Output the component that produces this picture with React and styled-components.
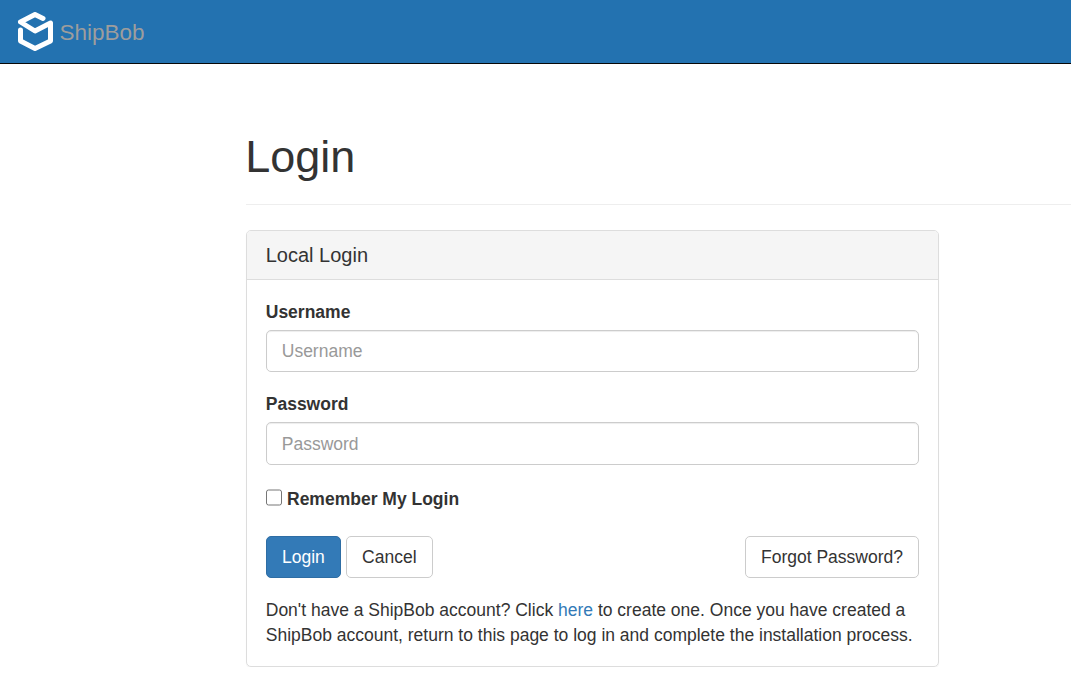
import React from 'react';
import styled, { createGlobalStyle } from 'styled-components';

// the original is bootstrap 3 seen at 125% browser zoom, so most sizes are 1.25x
const GlobalStyle = createGlobalStyle`
  html, body {
    margin: 0;
    padding: 0;
    background: #fff;
    overflow: hidden;
  }
  body {
    font-family: "Liberation Sans", Arial, sans-serif;
    font-size: 17.5px;
    line-height: 25px;
    color: #333;
  }
  * {
    box-sizing: border-box;
  }
`;

const Navbar = styled.nav`
  height: 64px;
  background: #2372b0;
  border-bottom: 1px solid #080808;
  display: flex;
  align-items: center;
  padding-left: 15.5px;
`;

const Brand = styled.a`
  display: flex;
  align-items: center;
  gap: 6px;
  color: #9d9d9d;
  font-size: 22.5px;
  text-decoration: none;
`;

const BrandName = styled.span`
  position: relative;
  top: 1px;
`;

const Main = styled.main`
  padding-left: 246px;
`;

const PageHeader = styled.header`
  padding: 68px 0 22.5px;
  border-bottom: 1px solid #eee;
  margin-bottom: 25px;
`;

const Title = styled.h1`
  margin: 0 0 0 -0.75px;
  font-size: 45px;
  font-weight: 500;
  line-height: 49.5px;
`;

const Panel = styled.section`
  width: 693px;
  border: 1px solid #ddd;
  border-radius: 5px;
  box-shadow: 0 1px 1px rgba(0, 0, 0, 0.05);
`;

const PanelHeading = styled.div`
  height: 49px;
  padding: 0 18.75px;
  display: flex;
  align-items: center;
  background: #f5f5f5;
  border-bottom: 1px solid #ddd;
  border-radius: 4px 4px 0 0;
  font-size: 20px;
`;

const PanelBody = styled.div`
  padding: 18.5px 18.75px 18.25px;
`;

const Field = styled.div`
  margin-bottom: 18.75px;
`;

const Label = styled.label`
  display: block;
  margin-bottom: 5.25px;
  font-weight: 700;
  line-height: 26px;
`;

const Input = styled.input`
  display: block;
  width: 100%;
  height: 42.5px;
  padding: 1.5px 15px 0;
  border: 1px solid #ccc;
  border-radius: 5px;
  box-shadow: inset 0 1px 1px rgba(0, 0, 0, 0.075);
  font: inherit;
  color: #555;

  &::placeholder {
    color: #999;
    opacity: 1;
  }
`;

const Remember = styled.label`
  display: flex;
  align-items: center;
  gap: 5px;
  padding-top: 3px;
  margin-bottom: 24.25px;
  font-weight: 700;
`;

const Check = styled.input`
  width: 16.25px;
  height: 16.25px;
  margin: 0 0 3px 0;
`;

const Actions = styled.div`
  display: flex;
  gap: 4.75px;
  margin-bottom: 19.5px;
`;

const Button = styled.button`
  height: 42.5px;
  padding: 0 15.25px;
  border: 1px solid ${p => (p.$primary ? '#2e6da4' : '#ccc')};
  border-radius: 5px;
  background: ${p => (p.$primary ? '#337ab7' : '#fff')};
  color: ${p => (p.$primary ? '#fff' : '#333')};
  font: inherit;
  margin-left: ${p => (p.$right ? 'auto' : '0')};
`;

const Note = styled.p`
  margin: 0;
`;

const Link = styled.a`
  color: #337ab7;
  text-decoration: none;
`;

const Logo = () => (
  <svg width="38" height="40" viewBox="0 0 38 40" fill="none" stroke="#fff" strokeWidth="5" strokeLinejoin="round" strokeLinecap="round">
    <path d="M27 6.500 L19 2.500 L4.500 10 L19 19 L34.500 11 L34.500 29 L19 36.500 L4.500 29 L4.500 18" />
  </svg>
);

export default function App() {
  return (
    <>
      <GlobalStyle />
      <Navbar>
        <Brand href="#">
          <Logo />
          <BrandName>ShipBob</BrandName>
        </Brand>
      </Navbar>
      <Main>
        <PageHeader>
          <Title>Login</Title>
        </PageHeader>
        <Panel>
          <PanelHeading>Local Login</PanelHeading>
          <PanelBody>
            <Field>
              <Label>Username</Label>
              <Input placeholder="Username" />
            </Field>
            <Field>
              <Label>Password</Label>
              <Input type="password" placeholder="Password" />
            </Field>
            <Remember>
              <Check type="checkbox" />
              Remember My Login
            </Remember>
            <Actions>
              <Button $primary>Login</Button>
              <Button>Cancel</Button>
              <Button $right>Forgot Password?</Button>
            </Actions>
            <Note>
              Don't have a ShipBob account? Click <Link href="#">here</Link> to create one. Once you have created a
              ShipBob account, return to this page to log in and complete the installation process.
            </Note>
          </PanelBody>
        </Panel>
      </Main>
    </>
  );
}
